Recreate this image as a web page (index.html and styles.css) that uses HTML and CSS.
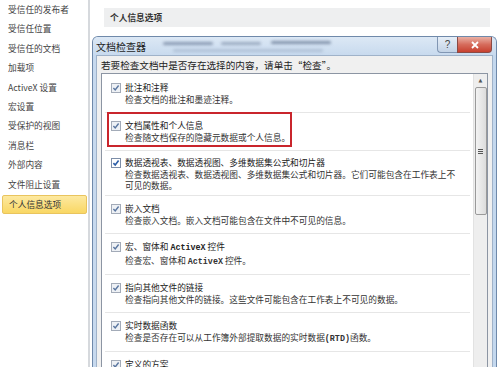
FILE: index.html
```html
<!DOCTYPE html>
<html lang="zh-CN">
<head>
<meta charset="utf-8">
<title>个人信息选项</title>
<link rel="stylesheet" href="styles.css">
</head>
<body>
<nav class="sidebar">
  <div class="nav-item">受信任的发布者</div>
  <div class="nav-item">受信任位置</div>
  <div class="nav-item">受信任的文档</div>
  <div class="nav-item">加载项</div>
  <div class="nav-item">ActiveX 设置</div>
  <div class="nav-item">宏设置</div>
  <div class="nav-item">受保护的视图</div>
  <div class="nav-item">消息栏</div>
  <div class="nav-item">外部内容</div>
  <div class="nav-item">文件阻止设置</div>
  <div class="nav-item active">个人信息选项</div>
</nav>
<main class="main">
  <div class="section-head">个人信息选项</div>
  <section class="dialog">
    <div class="titlebar">
      <span class="blob b1"></span>
      <span class="blob b2"></span>
      <span class="blob b3"></span>
      <span class="blob b4"></span>
      <span class="title">文档检查器</span>
      <div class="tb-buttons">
        <span class="btn-help">?</span>
        <span class="btn-close">
          <svg viewBox="0 0 10 8" class="x-icon"><path d="M2 1 L8 7 M8 1 L2 7" stroke="#fff" stroke-width="1.8" fill="none"/></svg>
        </span>
      </div>
    </div>
    <div class="panel">
      <p class="prompt">若要检查文档中是否存在选择的内容，请单击“检查”。</p>
      <div class="listbox">
        <div class="items">
          <div class="item">
            <svg class="cb" viewBox="0 0 10 10"><rect x=".5" y=".5" width="9" height="9" fill="#eef1f5" stroke="#a3abb8"/><path d="M2.4 5.1 L4.2 7 L7.6 2.5" fill="none" stroke="#5a76a0" stroke-width="1.4"/></svg>
            <div class="txt"><div class="t">批注和注释</div><div class="d">检查文档的批注和墨迹注释。</div></div>
          </div>
          <div class="item">
            <span class="redbox"></span>
            <svg class="cb" viewBox="0 0 10 10"><rect x=".5" y=".5" width="9" height="9" fill="#eef1f5" stroke="#a3abb8"/><path d="M2.4 5.1 L4.2 7 L7.6 2.5" fill="none" stroke="#5a76a0" stroke-width="1.4"/></svg>
            <div class="txt"><div class="t">文档属性和个人信息</div><div class="d">检查随文档保存的隐藏元数据或个人信息。</div></div>
          </div>
          <div class="item compact">
            <svg class="cb" viewBox="0 0 10 10"><rect x=".5" y=".5" width="9" height="9" fill="#fff" stroke="#7d8ea8"/><path d="M2.4 5.1 L4.2 7 L7.6 2.5" fill="none" stroke="#2c5ea8" stroke-width="1.6"/></svg>
            <div class="txt"><div class="t">数据透视表、数据透视图、多维数据集公式和切片器</div><div class="d">检查数据透视表、数据透视图、多维数据集公式和切片器。它们可能包含在工作表上不可见的数据。</div></div>
          </div>
          <div class="item">
            <svg class="cb" viewBox="0 0 10 10"><rect x=".5" y=".5" width="9" height="9" fill="#eef1f5" stroke="#a3abb8"/><path d="M2.4 5.1 L4.2 7 L7.6 2.5" fill="none" stroke="#5a76a0" stroke-width="1.4"/></svg>
            <div class="txt"><div class="t">嵌入文档</div><div class="d">检查嵌入文档。嵌入文档可能包含在文件中不可见的信息。</div></div>
          </div>
          <div class="item">
            <svg class="cb" viewBox="0 0 10 10"><rect x=".5" y=".5" width="9" height="9" fill="#eef1f5" stroke="#a3abb8"/><path d="M2.4 5.1 L4.2 7 L7.6 2.5" fill="none" stroke="#5a76a0" stroke-width="1.4"/></svg>
            <div class="txt"><div class="t">宏、窗体和 <span class="mono">ActiveX</span> 控件</div><div class="d">检查宏、窗体和 <span class="mono">ActiveX</span> 控件。</div></div>
          </div>
          <div class="item">
            <svg class="cb" viewBox="0 0 10 10"><rect x=".5" y=".5" width="9" height="9" fill="#eef1f5" stroke="#a3abb8"/><path d="M2.4 5.1 L4.2 7 L7.6 2.5" fill="none" stroke="#5a76a0" stroke-width="1.4"/></svg>
            <div class="txt"><div class="t">指向其他文件的链接</div><div class="d">检查指向其他文件的链接。这些文件可能包含在工作表上不可见的数据。</div></div>
          </div>
          <div class="item">
            <svg class="cb" viewBox="0 0 10 10"><rect x=".5" y=".5" width="9" height="9" fill="#eef1f5" stroke="#a3abb8"/><path d="M2.4 5.1 L4.2 7 L7.6 2.5" fill="none" stroke="#5a76a0" stroke-width="1.4"/></svg>
            <div class="txt"><div class="t">实时数据函数</div><div class="d">检查是否存在可以从工作簿外部提取数据的实时数据<span class="mono">(RTD)</span>函数。</div></div>
          </div>
          <div class="item">
            <svg class="cb" viewBox="0 0 10 10"><rect x=".5" y=".5" width="9" height="9" fill="#eef1f5" stroke="#a3abb8"/><path d="M2.4 5.1 L4.2 7 L7.6 2.5" fill="none" stroke="#5a76a0" stroke-width="1.4"/></svg>
            <div class="txt"><div class="t">定义的方案</div></div>
          </div>
        </div>
        <div class="scrollbar">
          <div class="sb-btn">▲</div>
          <div class="sb-thumb"><span class="grip"></span></div>
        </div>
      </div>
    </div>
  </section>
</main>
</body>
</html>
```
FILE: styles.css
```css
html, body {
  margin: 0;
  padding: 0;
}
body {
  width: 500px;
  height: 367px;
  overflow: hidden;
  display: flex;
  background: #fff;
  font-family: "Noto Sans CJK SC", "Liberation Sans", sans-serif;
  color: #333;
}
.sidebar {
  width: 88px;
  flex: none;
  border-right: 2px solid #d6d9dd;
  background: #fff;
}
.nav-item {
  height: 19.4px;
  line-height: 19.4px;
  padding-left: 8px;
  font-size: 8.7px;
  color: #444;
  white-space: nowrap;
}
.nav-item.active {
  margin: 1px 1px 0 2px;
  padding-left: 6px;
  height: 17px;
  line-height: 17px;
  background: linear-gradient(#fde9a0, #f9d764);
  border: 1px solid #e9c45e;
  border-radius: 2px;
  color: #333;
}
.main {
  flex: 1;
  display: flex;
  flex-direction: column;
  padding-top: 8px;
  min-width: 0;
}
.section-head {
  margin-left: 14px;
  width: 380px;
  height: 19px;
  line-height: 19px;
  padding-left: 6px;
  background: #eeeff0;
  font-size: 8.7px;
  font-weight: bold;
  color: #333;
}
.dialog {
  margin-top: 9px;
  margin-left: 2px;
  width: 397px;
  flex: 1;
  border: 1px solid #6f89aa;
  border-bottom: none;
  border-radius: 6px 6px 0 0;
  background: linear-gradient(to right, #c7d9ee, #bcd2ea 60%, #c4d8ee);
  padding: 0 3px;
  display: flex;
  flex-direction: column;
}
.titlebar {
  position: relative;
  height: 18px;
  display: flex;
  align-items: center;
  background: linear-gradient(#dce8f5, #c8daee);
  margin: 0 -3px;
  padding: 0 3px;
  border-radius: 5px 5px 0 0;
  overflow: hidden;
}
.title {
  position: relative;
  font-size: 10px;
  color: #1e1e1e;
}
.blob {
  position: absolute;
  height: 3px;
  border-radius: 2px;
  filter: blur(1.4px);
  background: rgba(45, 65, 100, 0.45);
}
.b1 { left: 70px; top: 5px; width: 50px; }
.b2 { left: 128px; top: 5px; width: 40px; background: rgba(45, 65, 100, 0.35); }
.b3 { left: 178px; top: 4px; width: 60px; background: rgba(45, 65, 100, 0.5); }
.b4 { left: 80px; top: 12px; width: 150px; background: rgba(45, 65, 100, 0.18); }
.tb-buttons {
  margin-left: auto;
  align-self: flex-start;
  display: flex;
  margin-right: 1px;
  position: relative;
}
.btn-help {
  width: 19px;
  height: 15px;
  border: 1px solid #8196b3;
  border-top: none;
  border-right: none;
  border-radius: 0 0 0 4px;
  background: linear-gradient(#e6eef7, #c3d3e6);
  font-family: "Liberation Sans", sans-serif;
  font-size: 10px;
  line-height: 15px;
  text-align: center;
  color: #444;
}
.btn-close {
  width: 33px;
  height: 15px;
  border: 1px solid #8a4a45;
  border-top: none;
  border-radius: 0 0 4px 0;
  background: linear-gradient(#eab0a4, #d66c5c 50%, #c7402f);
  display: flex;
  align-items: center;
  justify-content: center;
}
.x-icon {
  width: 10px;
  height: 8px;
}
.panel {
  flex: 1;
  background: #f0f0f0;
  border: 1px solid #9fb2c9;
  border-bottom: none;
  padding: 2px 4px 0 4px;
  display: flex;
  flex-direction: column;
  min-height: 0;
}
.prompt {
  margin: 0 0 1px 0;
  font-size: 9.6px;
  line-height: 14px;
  color: #222;
  white-space: nowrap;
}
.listbox {
  flex: 1;
  display: flex;
  border: 1px solid #8c95a3;
  border-bottom: none;
  background: #fff;
  min-height: 0;
  overflow: hidden;
}
.items {
  flex: 1;
  padding-top: 1px;
  min-width: 0;
}
.item {
  position: relative;
  margin: 0 3px;
  padding: 6px 12px 6px 6px;
  border-bottom: 1px solid #e6e6e6;
  display: grid;
  grid-template-columns: 10px 1fr;
  column-gap: 4px;
  align-items: start;
}
.item.compact {
  padding-top: 5px;
  padding-bottom: 4px;
}
.cb {
  width: 10px;
  height: 10px;
  margin-top: 1.5px;
}
.t {
  font-size: 8.7px;
  line-height: 13px;
  color: #222;
  white-space: nowrap;
}
.d {
  font-size: 8.7px;
  line-height: 12px;
  color: #333;
}
.compact .d {
  line-height: 11px;
}
.mono {
  font-family: "Liberation Mono", monospace;
  font-weight: bold;
  font-size: 8.4px;
}
.redbox {
  position: absolute;
  left: 2px;
  top: -1px;
  width: 185px;
  height: 35px;
  border: 2px solid #c9252c;
  box-sizing: border-box;
}
.scrollbar {
  width: 13px;
  flex: none;
  background: #eeeeee;
  border-left: 1px solid #e2e2e2;
  display: flex;
  flex-direction: column;
  align-items: center;
}
.sb-btn {
  height: 13px;
  font-size: 5px;
  line-height: 13px;
  color: #555;
  font-family: "DejaVu Sans", sans-serif;
}
.sb-thumb {
  width: 10px;
  height: 126px;
  border: 1px solid #9a9a9a;
  border-radius: 2px;
  background: linear-gradient(to right, #f3f3f3, #dcdcdc);
  display: flex;
  align-items: center;
  justify-content: center;
}
.grip {
  width: 5px;
  height: 5px;
  background: repeating-linear-gradient(#555 0 1px, transparent 1px 2px);
}
```
